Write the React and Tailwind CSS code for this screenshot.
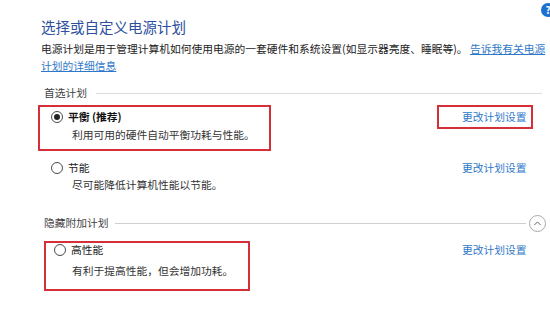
import { useState } from "react";

const plans = [
  { id: "balanced", name: "平衡 (推荐)", desc: "利用可用的硬件自动平衡功耗与性能。" },
  { id: "saver", name: "节能", desc: "尽可能降低计算机性能以节能。" },
];

function Radio({ checked }) {
  return (
    <span className="flex h-[12px] w-[12px] shrink-0 items-center justify-center rounded-full border border-[#4a4a4a] bg-white">
      {checked && <span className="h-[6px] w-[6px] rounded-full bg-[#222]" />}
    </span>
  );
}

function PlanRow({ plan, checked, onSelect, titleGap, shift = "", className = "" }) {
  return (
    <div className={`flex ${className}`}>
      <div className="w-[421px] pl-[10px]">
        <button
          onClick={onSelect}
          className={`flex h-[16px] items-center gap-[5px] text-left ${shift}`}
        >
          <Radio checked={checked} />
          <span className={checked ? "font-bold text-[#111]" : "text-[#222]"}>
            {plan.name}
          </span>
        </button>
        <p className={`pl-[21px] leading-[16px] text-[#333] ${titleGap}`}>{plan.desc}</p>
      </div>
      <a className="h-[16px] leading-[16px] text-[#2f78c8]">更改计划设置</a>
    </div>
  );
}

export default function App() {
  const [selected, setSelected] = useState("balanced");

  return (
    <div
      className="relative h-[324px] w-[550px] overflow-hidden bg-white pl-[41px] text-[10.75px]"
      style={{ fontFamily: '"Noto Sans CJK SC", "Noto Sans", sans-serif' }}
    >
      {/* help icon, clipped by the window edge */}
      <span className="absolute left-[541px] top-[3px] flex h-[14px] w-[14px] items-center justify-center rounded-full bg-[#1d6fd1] text-[10px] font-bold leading-none text-white">
        ?
      </span>

      <h1 className="pt-[18px] text-[14.5px] leading-[18px] text-[#2d4f9e]">
        选择或自定义电源计划
      </h1>
      <p className="mt-[4px] leading-[17px] text-[#222]">
        <span className="whitespace-nowrap">
          电源计划是用于管理计算机如何使用电源的一套硬件和系统设置(如显示器亮度、睡眠等)。{" "}
          <a className="text-[#2f78c8] underline">告诉我有关电源</a>
        </span>
        <br />
        <a className="text-[#2f78c8] underline">计划的详细信息</a>
      </p>

      {/* preferred plans */}
      <div className="mt-[11px] flex h-[16px] items-center pl-[3px] pr-[8px]">
        <span className="text-[#444]">首选计划</span>
        <span className="ml-[9px] h-px flex-1 bg-[#dcdcdc]" />
      </div>

      <PlanRow
        plan={plans[0]}
        checked={selected === "balanced"}
        onSelect={() => setSelected("balanced")}
        titleGap="mt-[2px]"
        className="mt-[8px]"
      />
      <PlanRow
        plan={plans[1]}
        checked={selected === "saver"}
        onSelect={() => setSelected("saver")}
        titleGap="mt-[1px]"
        className="mt-[17px]"
      />

      {/* hidden plans */}
      <div className="mt-[22px] flex h-[16px] items-center pl-[3px] pr-[4px]">
        <span className="text-[#444]">隐藏附加计划</span>
        <span className="ml-[6px] h-px flex-1 bg-[#cfcfcf]" />
        <span className="ml-[3px] flex h-[17px] w-[17px] items-center justify-center rounded-full border border-[#a8a8a8]">
          <svg width="9" height="9" viewBox="0 0 10 10" fill="none">
            <path d="M1.5 6.8 L5 3.2 L8.5 6.8" stroke="#666" strokeWidth="1.1" />
          </svg>
        </span>
      </div>

      <PlanRow
        plan={{ id: "high", name: "高性能", desc: "有利于提高性能，但会增加功耗。" }}
        checked={selected === "high"}
        onSelect={() => setSelected("high")}
        titleGap="mt-[5px]"
        shift="ml-[3px]"
        className="mt-[11px]"
      />

      {/* red annotation boxes */}
      <div className="pointer-events-none absolute left-[38px] top-[105px] h-[46px] w-[233px] border-2 border-[#d5303a]" />
      <div className="pointer-events-none absolute left-[437px] top-[105px] h-[24px] w-[96px] border-2 border-[#d5303a]" />
      <div className="pointer-events-none absolute left-[44px] top-[241px] h-[50px] w-[206px] border-2 border-[#d5303a]" />
    </div>
  );
}
